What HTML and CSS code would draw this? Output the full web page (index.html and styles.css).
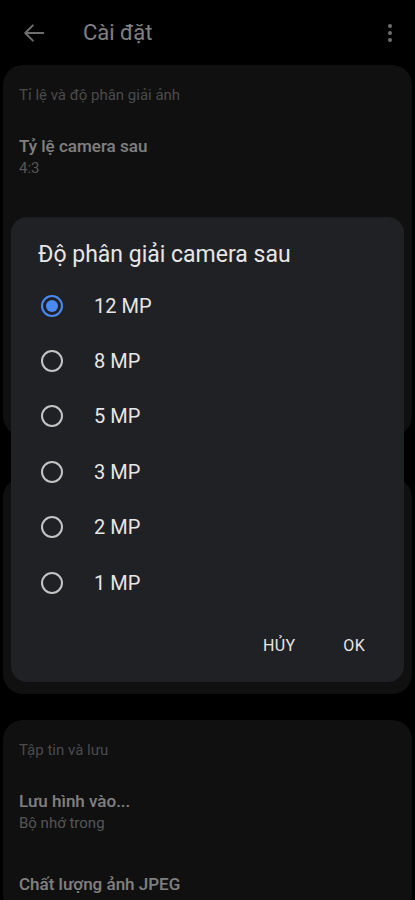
FILE: index.html
```html
<!DOCTYPE html>
<html lang="vi">
<head>
    <meta charset="UTF-8">
    <title>Cài đặt</title>
    <link rel="stylesheet" href="styles.css">
</head>
<body>
    <div class="screen">
        <header class="app-bar">
            <button class="icon-btn back" aria-label="Quay lại">
                <svg width="28" height="28" viewBox="0 0 24 24"><path d="M20 12H4.5M11 5.5 4.5 12l6.5 6.5" fill="none" stroke="currentColor" stroke-width="1.7" stroke-linecap="round" stroke-linejoin="round"/></svg>
            </button>
            <h1>Cài đặt</h1>
            <button class="icon-btn more" aria-label="Thêm">
                <span></span><span></span><span></span>
            </button>
        </header>

        <!-- rows below the dialog are covered, so only the visible ones are kept -->
        <section class="card card-first">
            <div class="card-header">Tỉ lệ và độ phân giải ảnh</div>
            <div class="row">
                <div class="row-title">Tỷ lệ camera sau</div>
                <div class="row-sub">4:3</div>
            </div>
        </section>

        <section class="card card-second"></section>

        <section class="card">
            <div class="card-header">Tập tin và lưu</div>
            <div class="row">
                <div class="row-title">Lưu hình vào...</div>
                <div class="row-sub">Bộ nhớ trong</div>
            </div>
            <div class="row">
                <div class="row-title">Chất lượng ảnh JPEG</div>
            </div>
        </section>
    </div>

    <div class="scrim"></div>

    <div class="dialog" role="dialog">
        <h2>Độ phân giải camera sau</h2>
        <ul class="options">
            <li class="option checked"><span class="radio"></span>12 MP</li>
            <li class="option"><span class="radio"></span>8 MP</li>
            <li class="option"><span class="radio"></span>5 MP</li>
            <li class="option"><span class="radio"></span>3 MP</li>
            <li class="option"><span class="radio"></span>2 MP</li>
            <li class="option"><span class="radio"></span>1 MP</li>
        </ul>
        <div class="actions">
            <button class="text-btn">HỦY</button>
            <button class="text-btn">OK</button>
        </div>
    </div>
</body>
</html>
```

FILE: styles.css
```css
:root {
    --bg: #000;
    --card: #202021;
    --dialog: #202125;
    --text: #e6e6e6;
    --accent: #4a8af4;
}

* {
    box-sizing: border-box;
}

body {
    margin: 0;
    background: var(--bg);
    font-family: Roboto, "Noto Sans", sans-serif;
    color: #fff;
    overflow: hidden;
    height: 900px;
}

.screen {
    padding: 0 3px;
}

.app-bar {
    height: 65px;
    display: flex;
    align-items: center;
    padding: 0 10px 0 17px;
}

.app-bar h1 {
    margin: 0 0 0 35px;
    font-size: 22px;
    font-weight: 400;
    flex: 1;
}

.icon-btn {
    background: none;
    border: none;
    padding: 0;
    color: #ddd;
    display: flex;
    cursor: pointer;
}

.more {
    flex-direction: column;
    gap: 3px;
    width: 24px;
    align-items: center;
}

.more span {
    width: 4px;
    height: 4px;
    border-radius: 50%;
    background: #ddd;
}

.card {
    background: var(--card);
    border-radius: 20px;
    margin-bottom: 26px;
    overflow: hidden;
}

.card-first {
    min-height: 371px;
    margin-bottom: 42px;
}

.card-second {
    min-height: 216px;
}

.card-header {
    padding: 19px 16px 9px;
    font-size: 15px;
    line-height: 22px;
    color: #959595;
}

.row {
    padding: 19.5px 16px;
}

.row-title {
    font-size: 17px;
    line-height: 22px;
    font-weight: 500;
    color: #fff;
}

.row-sub {
    font-size: 15px;
    line-height: 22px;
    color: #aaa;
}

.scrim {
    position: fixed;
    inset: 0;
    background: rgba(0, 0, 0, 0.5);
}

.dialog {
    position: fixed;
    left: 11px;
    top: 217px;
    width: 393px;
    height: 465px;
    background: var(--dialog);
    border-radius: 16px;
    padding: 24px 27px 18px 27px;
    display: flex;
    flex-direction: column;
}

.dialog h2 {
    margin: 0 0 9px;
    font-size: 23px;
    line-height: 28px;
    font-weight: 400;
    color: var(--text);
}

.options {
    list-style: none;
    margin: 0;
    padding: 0;
}

.option {
    height: 55.4px;
    display: flex;
    align-items: center;
    font-size: 20px;
    color: var(--text);
}

.radio {
    width: 22px;
    height: 22px;
    border: 2px solid #c4c4c4;
    border-radius: 50%;
    margin: 0 31px 0 3px;
    display: flex;
    align-items: center;
    justify-content: center;
}

.option.checked .radio {
    border-color: var(--accent);
}

.option.checked .radio::after {
    content: "";
    width: 12px;
    height: 12px;
    border-radius: 50%;
    background: var(--accent);
}

.actions {
    margin-top: auto;
    display: flex;
    justify-content: flex-end;
    gap: 24px;
}

.text-btn {
    background: none;
    border: none;
    font-family: inherit;
    font-size: 16px;
    line-height: 36px;
    padding: 0 12px;
    color: var(--text);
    letter-spacing: 0.3px;
}
```
